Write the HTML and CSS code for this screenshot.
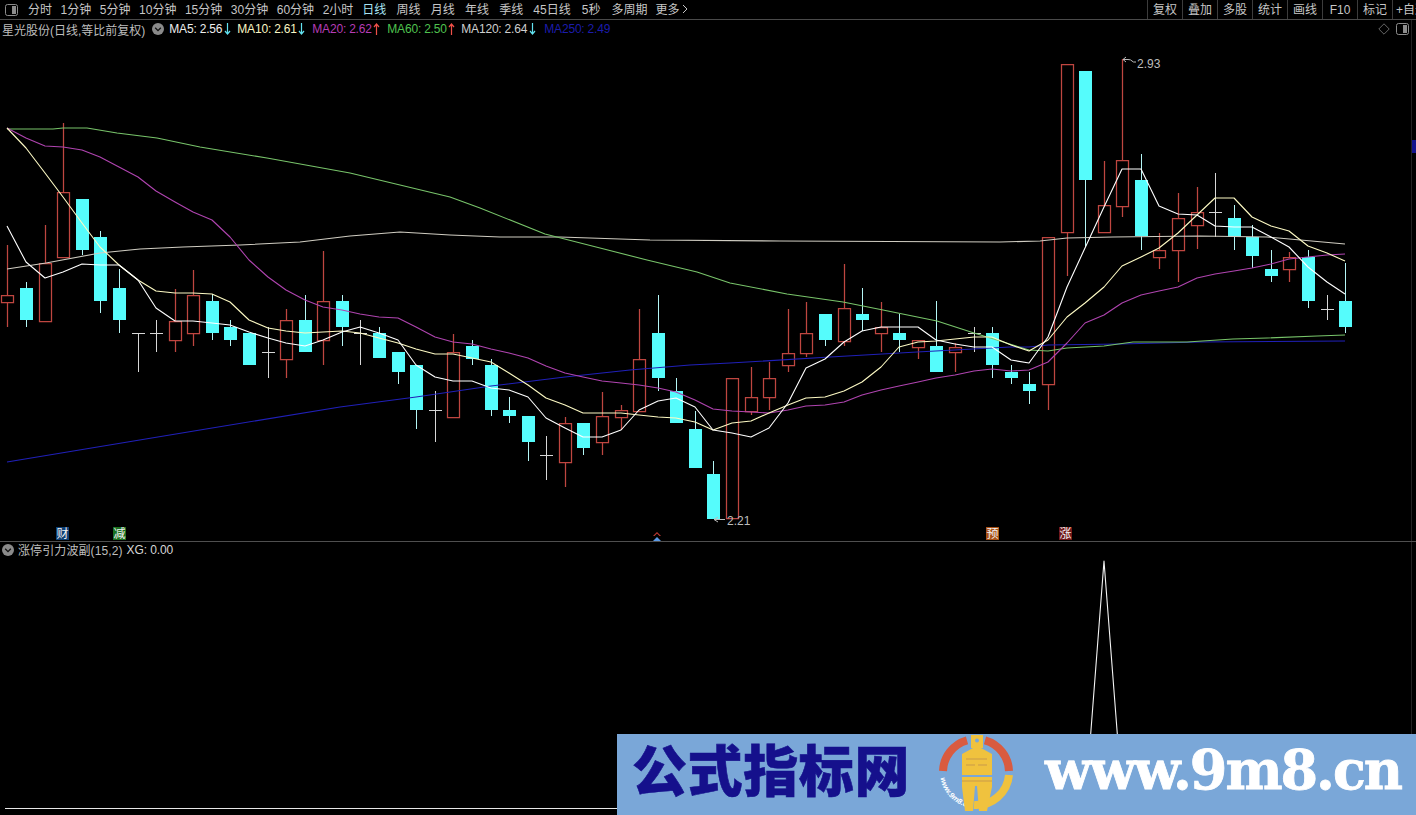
FILE: index.html
```html
<!DOCTYPE html>
<html lang="zh">
<head>
<meta charset="utf-8">
<title>星光股份 K线</title>
<link rel="stylesheet" href="styles.css">
</head>
<body>
<div class="app">
  <header class="toolbar">
    <div class="tool-left">
      <svg class="panel-icon" viewBox="0 0 13 12"><rect x=".5" y=".5" width="12" height="11" rx="2" class="pi-frame"/><rect x="7" y="2" width="4" height="8" class="pi-fill"/></svg>
      <nav class="periods periods-min">
        <span>分时</span><span>1分钟</span><span>5分钟</span><span>10分钟</span><span>15分钟</span><span>30分钟</span><span>60分钟</span><span>2小时</span>
      </nav>
      <nav class="periods periods-day">
        <span class="active">日线</span><span>周线</span><span>月线</span><span>年线</span><span>季线</span><span>45日线</span>
      </nav>
      <nav class="periods periods-more">
        <span>5秒</span><span>多周期</span><span class="more">更多<svg class="more-chev" viewBox="0 0 6 10"><path d="M1 1l4 4-4 4"/></svg></span>
      </nav>
    </div>
    <div class="tool-right">
      <span>复权</span><span>叠加</span><span>多股</span><span>统计</span><span>画线</span><span>F10</span><span>标记</span><span>+自选</span>
    </div>
  </header>

  <section class="panel panel-main">
    <div class="legend">
      <span class="stock">星光股份(日线,等比前复权)</span>
      <svg class="toggle" viewBox="0 0 12 12"><circle cx="6" cy="6" r="6"/><path d="M3.2 4.8L6 7.6l2.8-2.8"/></svg>
      <span class="ma c5">MA5: 2.56<svg class="arrow down" viewBox="0 0 7 12"><path d="M3.5 0v11M1 8l2.5 3L6 8"/></svg></span>
      <span class="ma c10">MA10: 2.61<svg class="arrow down" viewBox="0 0 7 12"><path d="M3.5 0v11M1 8l2.5 3L6 8"/></svg></span>
      <span class="ma c20">MA20: 2.62<svg class="arrow up" viewBox="0 0 7 12"><path d="M3.5 12V1M1 4l2.5-3L6 4"/></svg></span>
      <span class="ma c60">MA60: 2.50<svg class="arrow up" viewBox="0 0 7 12"><path d="M3.5 12V1M1 4l2.5-3L6 4"/></svg></span>
      <span class="ma c120">MA120: 2.64<svg class="arrow down" viewBox="0 0 7 12"><path d="M3.5 0v11M1 8l2.5 3L6 8"/></svg></span>
      <span class="ma c250">MA250: 2.49</span>
    </div>
    <div class="legend-tools">
      <svg class="diamond" viewBox="0 0 12 12"><path d="M6 .8L11.2 6 6 11.2.8 6z"/></svg>
      <svg class="panel-icon" viewBox="0 0 13 12"><rect x=".5" y=".5" width="12" height="11" rx="2" class="pi-frame"/><rect x="7" y="2" width="4" height="8" class="pi-fill"/></svg>
    </div>
    <svg class="chart" viewBox="0 20 1416 521" width="1416" height="521">
      <path class="edge" d="M1411.5 20V541"/>
      <rect class="side-mark" x="1412" y="140" width="4" height="13"/>
      <!-- red wicks -->
      <path class="wick-red" d="M7.5 245V295M7.5 302V327M45.5 225V263M63.5 123V192M175.5 289V321M175.5 340V352M193.5 270V295M193.5 333V346M286.5 309V320M286.5 359V378M323.5 251V301M323.5 340V365M453.5 334V352M565.5 417V423M565.5 462V487M602.5 392V416M602.5 442V455M621.5 405V410M621.5 417V430M639.5 309V359M751.5 367V397M751.5 411V415M769.5 362V378M769.5 397V410M788.5 309V353M788.5 365V372M806.5 302V333M806.5 353V357M844.5 264V308M844.5 341V346M881.5 302V327M881.5 333V352M918.5 347V359M955.5 343V347M955.5 352V372M1048.5 384V410M1067.5 232V276M1104.5 161V205M1122.5 59V160M1122.5 206V217M1159.5 233V250M1159.5 257V269M1178.5 193V218M1178.5 250V282M1197.5 187V212M1197.5 225V249M1289.5 252V257M1289.5 269V282"/>
      <path class="body-red" d="M1.5 295.5h12v7h-12zM39.5 263.5h12v58h-12zM57.5 192.5h12v65h-12zM169.5 321.5h12v19h-12zM187.5 295.5h12v38h-12zM280.5 320.5h12v39h-12zM317.5 301.5h12v39h-12zM447.5 352.5h12v65h-12zM559.5 423.5h12v39h-12zM596.5 416.5h12v26h-12zM615.5 410.5h12v7h-12zM633.5 359.5h12v52h-12zM726.5 378.5h12v140h-12zM745.5 397.5h12v14h-12zM763.5 378.5h12v19h-12zM782.5 353.5h12v12h-12zM800.5 333.5h12v20h-12zM838.5 308.5h12v33h-12zM875.5 327.5h12v6h-12zM912.5 340.5h12v7h-12zM949.5 347.5h12v5h-12zM1042.5 237.5h12v147h-12zM1061.5 64.5h12v168h-12zM1098.5 205.5h12v27h-12zM1116.5 160.5h12v46h-12zM1153.5 250.5h12v7h-12zM1172.5 218.5h12v32h-12zM1191.5 212.5h12v13h-12zM1283.5 257.5h12v12h-12z"/>
      <!-- cyan wicks and bodies -->
      <path class="wick-cyan" d="M26.5 282V327M82.5 199V255M100.5 231V313M119.5 269V333M212.5 294V340M230.5 320V346M305.5 295V352M342.5 295V346M379.5 327V358M398.5 352V384M416.5 365V429M472.5 340V365M491.5 359V416M509.5 397V423M528.5 416V461M583.5 423V455M658.5 295V391M676.5 378V423M695.5 411V468M713.5 461V519M825.5 314V346M862.5 288V331M899.5 314V352M936.5 301V372M992.5 327V378M1011.5 365V384M1029.5 372V404M1085.5 71V247M1141.5 154V250M1234.5 205V250M1252.5 225V268M1271.5 250V282M1308.5 250V308M1345.5 263V333"/>
      <path class="body-cyan" d="M20 288h13v32h-13zM76 199h13v51h-13zM94 237h13v64h-13zM113 288h13v32h-13zM206 301h13v32h-13zM224 327h13v13h-13zM243 333h13v32h-13zM299 320h13v32h-13zM336 301h13v26h-13zM373 333h13v25h-13zM392 352h13v20h-13zM410 365h13v45h-13zM466 346h13v13h-13zM485 365h13v45h-13zM503 410h13v6h-13zM522 416h13v26h-13zM577 423h13v25h-13zM652 333h13v45h-13zM670 391h13v32h-13zM689 429h13v39h-13zM707 474h13v45h-13zM819 314h13v26h-13zM856 314h13v6h-13zM893 333h13v7h-13zM930 346h13v26h-13zM986 333h13v32h-13zM1005 372h13v6h-13zM1023 384h13v7h-13zM1079 71h13v109h-13zM1135 180h13v56h-13zM1228 218h13v19h-13zM1246 237h13v19h-13zM1265 269h13v7h-13zM1302 257h13v44h-13zM1339 301h13v26h-13z"/>
      <!-- doji -->
      <path class="doji" d="M138.5 333V372M132 333.5H145M156.5 320V352M150 333.5H163M268.5 327V378M262 352.5H275M360.5 320V365M354 333.5H367M435.5 391V442M429 410.5H442M546.5 436V480M540 455.5H553M974.5 327V352M968 333.5H981M1215.5 173V237M1209 212.5H1222M1327.5 295V320M1321 309.5H1334"/>
      <!-- moving averages -->
      <polyline class="line ma250" points="7,462 200,430 340,407 416,397 491,386 565,377 630,370 690,365 730,363 830,357 917,352 1010,347 1029,347 1048,345 1120,344 1200,342 1345,341"/>
      <polyline class="line ma120" points="7,269 46,263 100,253 140,249 183,247 240,245 300,242 350,236 400,232 450,235 500,237 560,237 650,240 780,241 1000,242 1040,241 1067,238 1113,237 1200,236 1267,237 1345,244"/>
      <polyline class="line ma60" points="7,129 53,129 63,128 87,128 117,133 157,138 200,147 267,158 350,173 400,185 450,197 480,208 545,234 600,248 647,260 697,272 730,283 787,294 843,302 883,310 937,321 974,333 1000,341 1029,350 1048,351 1067,348 1104,346 1133,342 1187,342 1233,339 1267,338 1317,336 1345,335"/>
      <polyline class="line ma20" points="7,128 26,138 45,146 63,147 82,150 100,157 119,167 138,177 156,191 175,202 193,212 212,220 230,237 249,260 268,277 286,290 305,300 323,307 342,310 360,314 379,317 398,318 416,327 435,337 453,342 472,344 491,349 509,353 528,358 546,366 565,373 583,377 602,381 621,383 639,385 658,388 676,392 695,400 713,409 732,411 751,412 769,413 788,410 806,406 825,405 844,402 862,395 881,390 899,386 918,382 936,378 955,375 974,371 992,369 1011,371 1029,370 1048,362 1067,343 1085,323 1104,315 1122,303 1141,295 1159,291 1178,287 1197,278 1215,274 1234,271 1252,268 1271,264 1289,259 1308,257 1327,255 1345,254"/>
      <polyline class="line ma10" points="7,128 26,148 45,173 63,197 82,223 100,247 119,265 138,280 156,291 175,293 193,293 212,294 230,302 249,320 268,328 286,331 305,333 323,332 342,331 360,333 379,338 398,343 416,349 435,354 453,354 472,358 491,362 509,373 528,385 546,398 565,405 583,413 602,413 621,413 639,415 658,417 676,418 695,422 713,430 732,423 751,421 769,413 788,405 806,398 825,397 844,391 862,382 881,367 899,347 918,342 936,341 955,339 974,337 992,337 1011,345 1029,351 1048,340 1067,317 1085,303 1104,287 1122,266 1141,257 1159,248 1178,233 1197,215 1215,198 1234,198 1252,217 1271,226 1289,231 1308,246 1327,253 1345,261"/>
      <polyline class="line ma5" points="7,226 26,262 45,278 63,272 82,264 100,265 119,265 138,280 156,308 175,321 193,321 212,323 230,325 249,332 268,338 286,343 305,346 323,340 342,332 360,327 379,333 398,340 416,365 435,377 453,381 472,381 491,388 509,390 528,397 546,418 565,428 583,437 602,437 621,430 639,410 658,401 676,398 695,407 713,430 732,433 751,437 769,428 788,403 806,368 825,359 844,342 862,331 881,327 899,327 918,327 936,340 955,344 974,347 992,347 1011,360 1029,363 1048,337 1067,287 1085,248 1104,207 1122,169 1141,169 1159,206 1178,214 1197,215 1215,226 1234,227 1252,227 1271,237 1289,247 1308,267 1327,282 1345,294"/>
      <!-- price notes -->
      <path class="note" d="M1126 57l-3 2.500 3 2.500M1123 59.500h5q3 0 4 1.500t4 1"/>
      <text class="price" x="1137" y="68">2.93</text>
      <path class="note" d="M718 517l-4 2.500 4 2.500M714 519.500h11"/>
      <text class="price" x="727" y="525">2.21</text>
      <!-- event marks -->
      <rect class="mk mk-cai" x="56" y="527" width="13" height="13"/>
      <text class="mk-text" x="62.500" y="538">财</text>
      <rect class="mk mk-jian" x="113" y="527" width="13" height="13"/>
      <text class="mk-text" x="119.500" y="538">减</text>
      <path class="mk-up-red" d="M653 536l4-4 4 4-1.500 0-2.500-2.500-2.500 2.500z"/>
      <path class="mk-up-blue" d="M653 541l4-4 4 4z"/>
      <rect class="mk mk-yu" x="986" y="527" width="13" height="13"/>
      <text class="mk-text" x="992.500" y="538">预</text>
      <rect class="mk mk-zhang" x="1059" y="527" width="13" height="13"/>
      <text class="mk-text" x="1065.500" y="538">涨</text>
    </svg>
  </section>

  <section class="panel panel-sub">
    <div class="legend legend-sub">
      <svg class="toggle" viewBox="0 0 12 12"><circle cx="6" cy="6" r="6"/><path d="M3.2 4.8L6 7.600l2.800-2.800"/></svg>
      <span class="stock">涨停引力波副(15,2)</span>
      <span class="xg">XG: 0.00</span>
    </div>
    <svg class="chart" viewBox="0 542 1416 273" width="1416" height="273">
      <path class="edge" d="M1411.5 542V815"/>
      <path class="base" d="M5 808.500H1345"/>
      <polyline class="line peak" points="1085,808 1104,561 1123,808"/>
    </svg>
  </section>

  <aside class="watermark">
    <span class="wm-title">公式指标网</span>
    <svg class="wm-logo" viewBox="0 0 80 81" width="80" height="81">
      <path class="ring-red" d="M7 37A33 33 0 0 1 31 6.300M49 6.300A33 33 0 0 1 73 37"/>
      <path class="ring-yellow" d="M73 41A33 33 0 0 1 38 71"/>
      <defs><path id="wm-arc" d="M4.500 44A36 36 0 0 0 33 73.300"/></defs>
      <text class="ring-text"><textPath href="#wm-arc">www.9m8.cn</textPath></text>
      <path class="suit" d="M35 1h12v13h-2l11 6v21H26V20l11-6h-2zM26 43h30v10l-5 24h-8l-2-25h-2l-2 25h-8l-3-24z"/>
      <circle class="suit-dot" cx="41" cy="6.500" r="2"/>
      <path class="suit-seam" d="M30 25h21M30 31h9M42 31h9M26 47h30"/>
    </svg>
    <span class="wm-url">www.9m8.cn</span>
  </aside>
</div>
</body>
</html>
```
FILE: styles.css
```css
* { box-sizing: border-box; }
html, body { margin: 0; padding: 0; background: #000; }
body {
  width: 1416px;
  height: 815px;
  overflow: hidden;
  font-family: "Liberation Sans", "Noto Sans CJK SC", sans-serif;
  font-size: 12px;
  color: #c6c6c6;
}
.app { position: relative; width: 1416px; height: 815px; display: flex; flex-direction: column; overflow: hidden; }

/* toolbar */
.toolbar {
  flex: 0 0 20px;
  height: 20px;
  border-bottom: 1px solid #4a4a4a;
  display: flex;
  justify-content: space-between;
  line-height: 19px;
}
.tool-left { display: flex; align-items: center; padding: 1px 0 0 5px; }
.panel-icon { width: 13px; height: 12px; display: block; }
.pi-frame { fill: none; stroke: #8c8c8c; }
.pi-fill { fill: #8c8c8c; }
.periods { display: flex; white-space: nowrap; }
.periods-min { margin-left: 10px; gap: 8.55px; }
.periods-day { margin-left: 9px; gap: 10.2px; }
.periods-more { margin-left: 11px; gap: 11px; }
.periods .active { color: #a8e4f4; }
.periods .more { margin-left: -3px; }
.more-chev { width: 6px; height: 10px; margin-left: 3px; }
.more-chev path { fill: none; stroke: #c6c6c6; }
.tool-right { display: flex; width: 269px; overflow: hidden; flex: none; padding-top: 0; }
.tool-right span { flex: 0 0 35px; border-left: 1px solid #3c3c3c; text-align: center; white-space: nowrap; padding-top: 1px; }
.tool-right span:last-child { text-align: left; padding-left: 3px; }

/* panels */
.panel { position: relative; flex: none; }
.panel-main { height: 522px; border-bottom: 1px solid #4f4f4f; }
.panel-sub { height: 273px; }
.chart { display: block; }

.legend {
  position: absolute;
  left: 2px;
  top: 1px;
  height: 16px;
  display: flex;
  align-items: center;
  white-space: nowrap;
  z-index: 1;
}
.stock { color: #bdbdbd; }
.toggle { width: 12px; height: 12px; margin-left: 7px; flex: none; }
.toggle circle { fill: #8a8a8a; }
.toggle path { fill: none; stroke: #111; stroke-width: 1.300; }
.ma { display: flex; align-items: center; letter-spacing: -.2px; flex: none; }
.toggle + .ma { margin-left: 5px; }
.arrow { width: 7px; height: 12px; margin-left: 1.500px; flex: none; fill: none; stroke-width: 1.200; }
.arrow.down { stroke: #62e2f0; }
.arrow.up { stroke: #f05048; }
.c5 { color: #eeeeee; width: 68px; }
.c10 { color: #f8f6c4; width: 75px; }
.c20 { color: #b63cb6; width: 75px; }
.c60 { color: #4fc24f; width: 74px; }
.c120 { color: #cfcfcf; width: 83px; }
.c250 { color: #1c1cab; }

.legend-tools {
  position: absolute;
  top: 3px;
  right: 7px;
  display: flex;
  align-items: center;
  gap: 6px;
  z-index: 1;
}
.diamond { width: 12px; height: 12px; fill: none; stroke: #666; }

.legend-sub { left: 2px; top: 0; height: 15px; }
.legend-sub .toggle { margin-left: 0; }
.legend-sub .stock { margin-left: 4px; letter-spacing: .1px; }
.xg { margin-left: 4px; color: #d6d6d6; letter-spacing: -.1px; }

/* chart shapes */
.edge { stroke: #222; fill: none; }
.side-mark { fill: #14148c; }
.wick-red { stroke: #bf4640; stroke-width: 1.250; fill: none; }
.body-red { stroke: #bf4640; stroke-width: 1.250; fill: #000; }
.wick-cyan { stroke: #b4f6f6; fill: none; shape-rendering: crispEdges; }
.body-cyan { fill: #55fcfc; shape-rendering: crispEdges; }
.doji { stroke: #d6d6d6; fill: none; shape-rendering: crispEdges; }
.line { fill: none; stroke-width: 1.100; stroke-linejoin: round; }
.ma5 { stroke: #fff; }
.ma10 { stroke: #fdfac4; }
.ma20 { stroke: #b044b0; }
.ma60 { stroke: #78c46a; }
.ma120 { stroke: #d0cdc2; }
.ma250 { stroke: #2020b8; }
.note { fill: none; stroke: #bbb; }
.price { fill: #bdbdbd; font-size: 12px; }
.mk-cai { fill: #0e3f74; }
.mk-jian { fill: #1a7020; }
.mk-yu { fill: #a85014; }
.mk-zhang { fill: #701818; }
.mk-text { fill: #f2f2f2; font-size: 12px; text-anchor: middle; }
.mk-up-red { fill: #c23a32; }
.mk-up-blue { fill: #5a9ae8; }
.base { stroke: #e8e8e8; fill: none; }
.peak { stroke: #f4f4f4; }

/* watermark banner */
.watermark {
  position: absolute;
  left: 617px;
  top: 734px;
  width: 799px;
  height: 81px;
  background: #7aa7d8;
  display: flex;
  align-items: flex-start;
}
.wm-title {
  margin-left: 15px;
  width: 304px;
  flex: none;
  font-family: "Noto Sans CJK SC", sans-serif;
  font-weight: 900;
  font-size: 55px;
  line-height: 66px;
  letter-spacing: .6px;
  color: #15108c;
  -webkit-text-stroke: .6px #15108c;
  white-space: nowrap;
}
.wm-logo { flex: none; display: block; }
.ring-red, .ring-yellow { fill: none; stroke-width: 8; }
.ring-red { stroke: #d95b40; }
.ring-yellow { stroke: #f0c23e; }
.ring-text { fill: #fff; font-size: 7.500px; font-weight: bold; font-style: italic; }
.suit { fill: #f0c23e; }
.suit-dot { fill: #7aa7d8; }
.suit-seam { fill: none; stroke: #c99a4a; stroke-width: 1; }
.wm-url {
  margin-left: 29px;
  flex: none;
  font-family: "DejaVu Serif", serif;
  font-weight: bold;
  font-size: 54px;
  line-height: 72px;
  letter-spacing: -2px;
  color: #fff;
  -webkit-text-stroke: .8px #fff;
  white-space: nowrap;
}
```
